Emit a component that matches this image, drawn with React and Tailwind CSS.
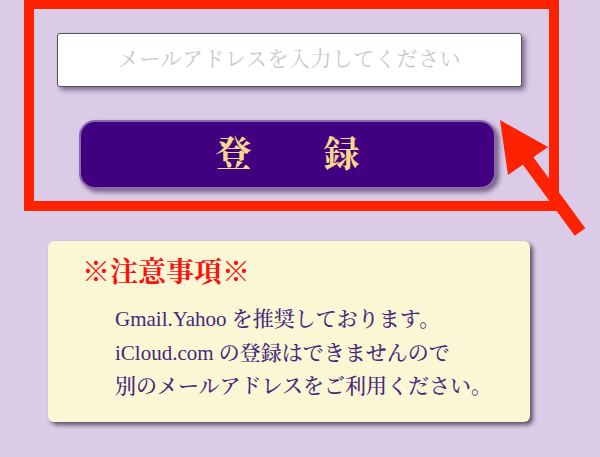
import React from "react";

const serif = { fontFamily: '"Liberation Serif", "Noto Serif CJK JP", "Noto Sans CJK JP", serif' };

export default function App() {
  return (
    <div className="relative w-[600px] h-[457px] overflow-hidden bg-[#dccbe6]" style={serif}>
      <div className="ml-[24px] w-[535px] h-[211px] border-[10px] border-t-[9px] border-[#ff2200] pt-[24px]">
        <div className="ml-[23px] w-[465px] h-[54px] bg-white border border-[#555] rounded-[3px] shadow-[3px_3px_5px_rgba(60,40,90,0.6)] flex items-center justify-center">
          <span className="text-[21px] text-[#c8c8c8] tracking-[0.5px]">メールアドレスを入力してください</span>
        </div>
        <button className="mt-[33px] ml-[45px] w-[417px] h-[69px] rounded-[16px] bg-[#40007f] border-2 border-[#8a6aa8] shadow-[3px_3px_5px_rgba(40,20,70,0.6)] flex items-center justify-center">
          <span className="text-[36px] font-bold text-[#f8d88a] leading-none" style={serif}>登　　録</span>
        </button>
      </div>
      <div className="mt-[30px] ml-[48px] w-[482px] h-[181px] bg-[#fbf7d5] rounded-[6px] shadow-[3px_3px_4px_rgba(40,30,50,0.7)] pt-[14px] pl-[34px]">
        <div className="text-[28px] leading-[36px] font-bold text-[#ff1010]">※注意事項※</div>
        <div className="mt-[12px] pl-[33px] text-[21px] leading-[33.5px] font-medium text-[#47297a]">
          <div>Gmail.Yahoo を推奨しております。</div>
          <div>iCloud.com の登録はできませんので</div>
          <div>別のメールアドレスをご利用ください。</div>
        </div>
      </div>
      <svg className="absolute left-0 top-0 pointer-events-none" width="600" height="457" viewBox="0 0 600 457">
        <line x1="526" y1="158" x2="580" y2="232" stroke="#ff2200" strokeWidth="13" />
        <polygon points="500,120 548,147 508,175" fill="#ff2200" />
      </svg>
    </div>
  );
}
